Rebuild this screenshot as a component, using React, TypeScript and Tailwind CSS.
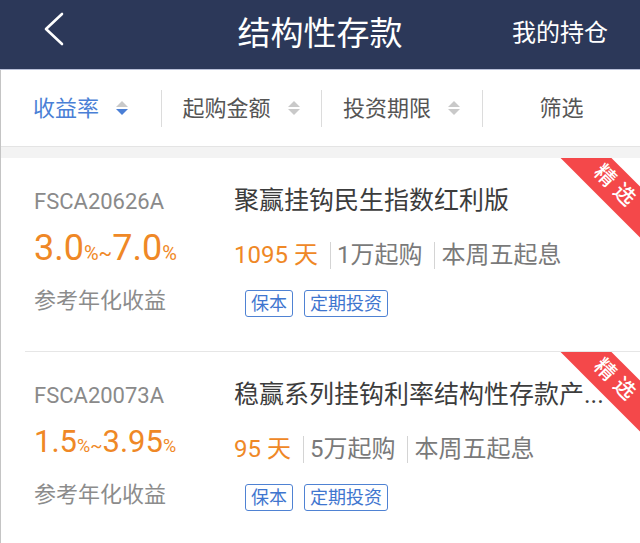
const font = "font-['Roboto','Noto_Sans_CJK_SC',sans-serif]";

function SortArrows({ active }: { active?: boolean }) {
  return (
    <svg width="14" height="18" viewBox="0 0 14 18" className="ml-[16px]">
      <path d="M7 2 L13 8 L1 8 Z" fill="#c9c9c9" />
      <path d="M1 10 L13 10 L7 16 Z" fill={active ? "#4a7fd6" : "#c9c9c9"} />
    </svg>
  );
}

function Tag({ children }: { children: string }) {
  return (
    <span className="flex h-[27px] items-center rounded-[3px] border-[1.5px] border-[#4f82d3] px-[5px] text-[18px] leading-none text-[#3f76cf]">
      {children}
    </span>
  );
}

type Product = {
  code: string;
  low: string;
  high: string;
  name: string;
  days: string;
  min: string;
  small?: boolean;
};

function ProductCard({ p, first }: { p: Product; first?: boolean }) {
  // long rates are shrunk to fit the left column
  const big = p.small ? "text-[31px]" : "text-[36px]";
  const pct = p.small ? "text-[18px]" : "text-[20px]";
  return (
    <div className={`relative h-[193px] overflow-hidden bg-white ${first ? "" : "ml-[24px] border-t border-[#e6e6e6]"}`}>
      <div className={`flex pt-[29px] ${first ? "" : "-ml-[24px]"}`}>
        <div className="flex w-[233px] flex-col pl-[33px]">
          <div className="h-[30px] text-[22px] leading-[30px] text-[#8a8a8a]">{p.code}</div>
          <div className="mt-[11px] flex h-[40px] items-baseline leading-[40px] text-[#ef8826]">
            <span className={big}>{p.low}</span>
            <span className={pct}>%~</span>
            <span className={big}>{p.high}</span>
            <span className={pct}>%</span>
          </div>
          <div className="mt-[18px] h-[30px] text-[22px] leading-[30px] text-[#8c8c8c]">参考年化收益</div>
        </div>
        <div className="flex flex-col">
          <div className="-mt-[1px] h-[30px] whitespace-nowrap text-[25px] leading-[30px] text-[#3c3c3c]">{p.name}</div>
          <div className="mt-[24px] flex h-[30px] items-center text-[24px] leading-[30px]">
            <span className="text-[#ef8826]">{p.days} 天</span>
            <span className="ml-[12px] mr-[6px] h-[27px] w-px bg-[#d4d4d4]" />
            <span className="text-[#7a7a7a]">{p.min}</span>
            <span className="ml-[12px] mr-[6px] h-[27px] w-px bg-[#d4d4d4]" />
            <span className="text-[#7a7a7a]">本周五起息</span>
          </div>
          <div className="ml-[11px] mt-[20px] flex gap-[11px]">
            <Tag>保本</Tag>
            <Tag>定期投资</Tag>
          </div>
        </div>
      </div>
      <div
        className={`absolute top-[10px] flex h-[36px] w-[150px] rotate-45 items-center justify-center bg-[#f4484a] text-[21px] font-medium tracking-[6px] text-white ${first ? "left-[538px]" : "left-[514px]"}`}
      >
        <span className="pl-[6px]">精选</span>
      </div>
    </div>
  );
}

export default function App() {
  const products: Product[] = [
    { code: "FSCA20626A", low: "3.0", high: "7.0", name: "聚赢挂钩民生指数红利版", days: "1095", min: "1万起购" },
    { code: "FSCA20073A", low: "1.5", high: "3.95", name: "稳赢系列挂钩利率结构性存款产...", days: "95", min: "5万起购", small: true },
  ];
  return (
    <div className={`h-[543px] w-[640px] overflow-hidden bg-white ${font}`}>
      <div className="relative flex h-[70px] items-center justify-center border-b border-[#b9c0d8] bg-[#2c3859]">
        <svg width="24" height="36" viewBox="0 0 24 36" className="absolute left-[42px] top-[11px]">
          <path d="M20 3 L4 18 L20 33" fill="none" stroke="white" strokeWidth="2.6" strokeLinecap="round" strokeLinejoin="round" />
        </svg>
        <span className="-mt-[2px] text-[33px] text-white">结构性存款</span>
        <span className="absolute right-[32px] top-[17px] text-[24px] leading-[32px] text-white">我的持仓</span>
      </div>
      <div className="border-l border-[#c4c4c4]">
        <div className="flex h-[77px] items-center border-b border-[#e4e4e4]">
          <div className="flex w-[160px] items-center justify-center text-[22px] text-[#4a7fd6]">
            收益率
            <SortArrows active />
          </div>
          <span className="h-[37px] w-px bg-[#dcdcdc]" />
          <div className="flex w-[159px] items-center justify-center text-[22px] text-[#555]">
            起购金额
            <SortArrows />
          </div>
          <span className="h-[37px] w-px bg-[#dcdcdc]" />
          <div className="flex w-[160px] items-center justify-center text-[22px] text-[#555]">
            投资期限
            <SortArrows />
          </div>
          <span className="h-[37px] w-px bg-[#dcdcdc]" />
          <div className="flex flex-1 items-center justify-center text-[22px] text-[#555]">筛选</div>
        </div>
        <div className="h-[11px] bg-[#f3f3f3]" />
        {products.map((p, i) => (
          <ProductCard key={p.code} p={p} first={i === 0} />
        ))}
      </div>
    </div>
  );
}
